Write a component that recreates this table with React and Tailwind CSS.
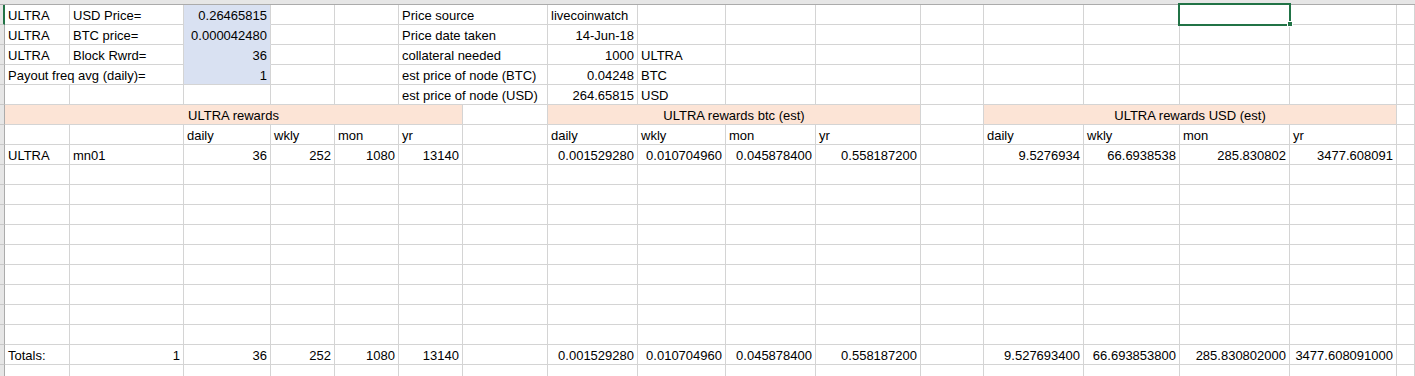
import React from 'react'

// column widths (A..Q), including each cell's right gridline
const COLS = [65, 114, 87, 64, 64, 64, 85, 90, 88, 90, 105, 63, 100, 96, 110, 107]

const L = 'left'
const R = 'right'
const C = 'center'

// each row: list of { c: column index, span, t: text, a: align, bg }
const rows = [
  [
    { c: 0, t: 'ULTRA' },
    { c: 1, t: 'USD Price=' },
    { c: 2, t: '0.26465815', a: R, bg: 'blue' },
    { c: 5, span: 2, t: 'Price source' },
    { c: 7, t: 'livecoinwatch' },
  ],
  [
    { c: 0, t: 'ULTRA' },
    { c: 1, t: 'BTC price=' },
    { c: 2, t: '0.000042480', a: R, bg: 'blue' },
    { c: 5, span: 2, t: 'Price date taken' },
    { c: 7, t: '14-Jun-18', a: R },
  ],
  [
    { c: 0, t: 'ULTRA' },
    { c: 1, t: 'Block Rwrd=' },
    { c: 2, t: '36', a: R, bg: 'blue' },
    { c: 5, span: 2, t: 'collateral needed' },
    { c: 7, t: '1000', a: R },
    { c: 8, t: 'ULTRA' },
  ],
  [
    { c: 0, span: 2, t: 'Payout freq avg (daily)=' },
    { c: 2, t: '1', a: R, bg: 'blueLast' },
    { c: 5, span: 2, t: 'est price of node (BTC)' },
    { c: 7, t: '0.04248', a: R },
    { c: 8, t: 'BTC' },
  ],
  [
    { c: 5, span: 2, t: 'est price of node (USD)' },
    { c: 7, t: '264.65815', a: R },
    { c: 8, t: 'USD' },
  ],
  [
    { c: 0, span: 6, t: 'ULTRA rewards', a: C, bg: 'peach' },
    { c: 7, span: 4, t: 'ULTRA rewards btc (est)', a: C, bg: 'peach' },
    { c: 12, span: 4, t: 'ULTRA rewards USD (est)', a: C, bg: 'peach' },
  ],
  [
    { c: 2, t: 'daily' },
    { c: 3, t: 'wkly' },
    { c: 4, t: 'mon' },
    { c: 5, t: 'yr' },
    { c: 7, t: 'daily' },
    { c: 8, t: 'wkly' },
    { c: 9, t: 'mon' },
    { c: 10, t: 'yr' },
    { c: 12, t: 'daily' },
    { c: 13, t: 'wkly' },
    { c: 14, t: 'mon' },
    { c: 15, t: 'yr' },
  ],
  [
    { c: 0, t: 'ULTRA' },
    { c: 1, t: 'mn01' },
    { c: 2, t: '36', a: R },
    { c: 3, t: '252', a: R },
    { c: 4, t: '1080', a: R },
    { c: 5, t: '13140', a: R },
    { c: 7, t: '0.001529280', a: R },
    { c: 8, t: '0.010704960', a: R },
    { c: 9, t: '0.045878400', a: R },
    { c: 10, t: '0.558187200', a: R },
    { c: 12, t: '9.5276934', a: R },
    { c: 13, t: '66.6938538', a: R },
    { c: 14, t: '285.830802', a: R },
    { c: 15, t: '3477.608091', a: R },
  ],
  [], [], [], [], [], [], [], [], [],
  [
    { c: 0, t: 'Totals:' },
    { c: 1, t: '1', a: R },
    { c: 2, t: '36', a: R },
    { c: 3, t: '252', a: R },
    { c: 4, t: '1080', a: R },
    { c: 5, t: '13140', a: R },
    { c: 7, t: '0.001529280', a: R },
    { c: 8, t: '0.010704960', a: R },
    { c: 9, t: '0.045878400', a: R },
    { c: 10, t: '0.558187200', a: R },
    { c: 12, t: '9.527693400', a: R },
    { c: 13, t: '66.693853800', a: R },
    { c: 14, t: '285.830802000', a: R },
    { c: 15, t: '3477.608091000', a: R },
  ],
  [],
]

const spanClass = {
  1: 'col-span-1',
  2: 'col-span-2',
  4: 'col-span-4',
  6: 'col-span-6',
}

const bgClass = {
  blue: 'bg-[#d9e1f2] border-b-[#d9e1f2]',
  blueLast: 'bg-[#d9e1f2]',
  peach: 'bg-[#fce4d6]',
}

const alignClass = {
  left: 'text-left',
  right: 'text-right',
  center: 'text-center',
}

const Cell = ({ cell }) => {
  const span = cell?.span || 1
  return (
    <div
      className={`h-[20px] border-r border-b border-[#d4d4d4] px-[3px] pt-[2px] leading-[17px] whitespace-nowrap overflow-hidden ${spanClass[span]} ${
        cell?.bg ? bgClass[cell.bg] : ''
      } ${alignClass[cell?.a || L]}`}
    >
      {cell?.t}
    </div>
  )
}

const Row = ({ cells, index }) => {
  const out = []
  let col = 0
  while (col < 17) {
    const cell = cells.find((c) => c.c === col)
    if (cell) {
      out.push(<Cell key={col} cell={cell} />)
      col += cell.span || 1
    } else {
      out.push(<Cell key={col} />)
      col += 1
    }
  }
  return (
    <>
      {/* row header remnant */}
      <div
        className={`h-[20px] bg-[#e6e6e6] border-b border-[#c8c8c8] ${
          index === 0 ? 'border-r-2 border-r-[#217346]' : 'border-r border-r-[#ababab]'
        }`}
      />
      {out}
    </>
  )
}

export default function App() {
  return (
    <div
      className="relative w-[1415px] h-[376px] overflow-hidden bg-white text-[13px] text-black"
      style={{ fontFamily: '"Liberation Sans", Arial, sans-serif' }}
    >
      {/* column header remnant */}
      <div className="h-[5px] bg-[#e6e6e6] border-b border-[#ababab]" />

      <div className="grid grid-cols-[5px_65px_114px_87px_64px_64px_64px_85px_90px_88px_90px_105px_63px_100px_96px_110px_107px_1fr]">
        {rows.map((cells, i) => (
          <Row key={i} cells={cells} index={i} />
        ))}
      </div>

      {/* active cell selection */}
      <div className="absolute left-[1178px] top-[3px] w-[113px] h-[23px] border-2 border-[#217346]" />
      <div className="absolute left-[1287px] top-[21px] w-[6px] h-[6px] bg-[#217346] border border-white" />
    </div>
  )
}
